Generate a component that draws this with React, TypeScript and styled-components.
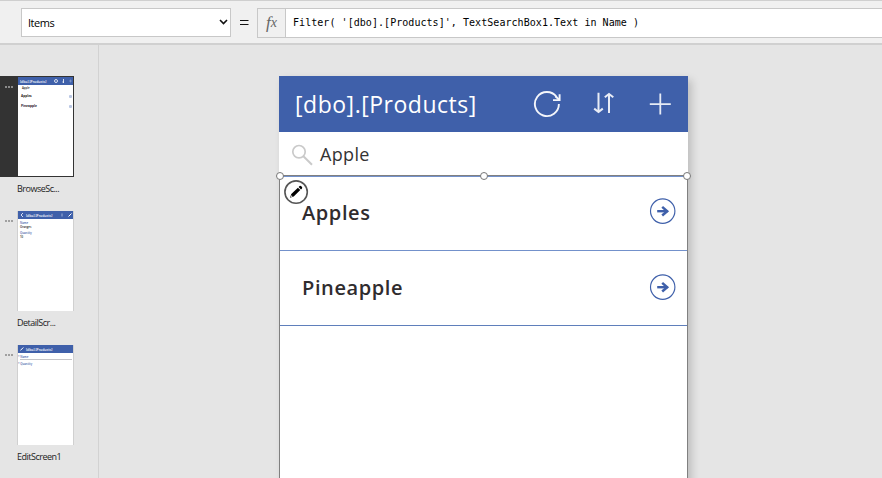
import React from "react";
import styled, { createGlobalStyle } from "styled-components";

const blue = "#3f60aa";

const GlobalStyle = createGlobalStyle`
  * { box-sizing: border-box; }
  html, body { margin: 0; height: 100%; overflow: hidden; }
  body { background: #e5e5e5; font-family: "Open Sans", "Noto Sans", sans-serif; color: #000; }
  svg { display: block; flex: none; }
`;

const Page = styled.div`
  width: 882px;
  height: 478px;
  display: flex;
  flex-direction: column;
  overflow: hidden;
  background: #e5e5e5;
`;

const FormulaBar = styled.div`
  height: 45px;
  flex: none;
  display: flex;
  align-items: flex-start;
  padding: 7px 0 0 21px;
  background: #f0f0f0;
  border-top: 1px solid #cfcfcf;
  border-bottom: 2px solid #d0d0d0;
`;

const PropertySelect = styled.div`
  width: 210px;
  height: 29px;
  display: flex;
  align-items: center;
  justify-content: space-between;
  padding: 0 2px 0 6px;
  background: #fff;
  border: 1px solid #c8c8c8;
  font-size: 11px;
  letter-spacing: -0.45px;
`;

const Equals = styled.div`
  width: 26px;
  height: 29px;
  display: flex;
  align-items: center;
  justify-content: center;
`;

const FormulaField = styled.div`
  flex: 1;
  height: 30px;
  display: flex;
  background: #fff;
  border: 1px solid #c8c8c8;
  border-right: 0;
`;

const FxLabel = styled.div`
  width: 28px;
  display: flex;
  align-items: center;
  justify-content: center;
  background: #f0f0f0;
  border-right: 1px solid #c8c8c8;
  color: #666;
  font: italic 17px/26px "Liberation Serif", serif;
  span { font-size: 14px; }
`;

const Formula = styled.div`
  padding-left: 7px;
  font: 10px/27px "DejaVu Sans Mono", monospace;
  letter-spacing: 0.05px;
  white-space: pre;
`;

const Workspace = styled.div`
  flex: 1;
  min-height: 0;
  display: flex;
`;

const Sidebar = styled.div`
  width: 99px;
  flex: none;
  padding-top: 31px;
  border-right: 1px solid #d2d2d2;
`;

const ScreenItem = styled.div<{ $gap: number }>`
  margin-bottom: ${(p) => p.$gap}px;
`;

const ScreenFrame = styled.div<{ $active?: boolean }>`
  width: 74px;
  height: 101px;
  display: flex;
  padding: 1px 1px ${(p) => (p.$active ? 1 : 0)}px 0;
  background: ${(p) => (p.$active ? "#333" : "transparent")};
`;

const Dots = styled.div<{ $active?: boolean }>`
  width: 18px;
  flex: none;
  display: flex;
  gap: 1px;
  padding: 9px 0 0 5px;
  i {
    width: 2px;
    height: 2px;
    background: ${(p) => (p.$active ? "#8a8a8a" : "#a0a0a0")};
  }
`;

const Thumb = styled.div<{ $active?: boolean }>`
  width: ${(p) => (p.$active ? 55 : 57)}px;
  margin-left: ${(p) => (p.$active ? 0 : -1)}px;
  flex: none;
  background: #fff;
  border: solid #d0d0d0;
  border-width: ${(p) => (p.$active ? "0" : "0 1px")};
`;

const ThumbHeader = styled.div`
  height: 8px;
  display: flex;
  align-items: center;
  padding: 0 1px 0 2px;
  background: ${blue};
  color: #fff;
  font-size: 3.4px;
  font-weight: 600;
  line-height: 7px;
  white-space: nowrap;
`;

const ThumbIcons = styled.div`
  margin-left: auto;
  display: flex;
  gap: 4px;
`;

const ThumbLine = styled.div<{ $tone?: string; $bold?: boolean; $h: number; $indent?: number }>`
  height: ${(p) => p.$h}px;
  display: flex;
  align-items: center;
  justify-content: space-between;
  padding: 0 1px 0 ${(p) => p.$indent ?? 2}px;
  color: ${(p) => p.$tone ?? "#222"};
  font-size: ${(p) => (p.$bold ? 3.2 : 2.8)}px;
  font-weight: ${(p) => (p.$bold ? 700 : 600)};
  line-height: 4px;
  white-space: nowrap;
`;

const ThumbGap = styled.div<{ $h: number }>`
  height: ${(p) => p.$h}px;
`;

const ThumbInput = styled.div`
  height: 1px;
  margin: 0 1px 0 2px;
  background: #c4c4c8;
`;

const ThumbArrow = styled.b`
  width: 3px;
  height: 3px;
  border-radius: 1px;
  background: #bac7e4;
`;

const ScreenName = styled.div`
  padding: 4px 0 0 17px;
  font-size: 9px;
  line-height: 15px;
  letter-spacing: -0.5px;
  color: #222;
`;

const Canvas = styled.div`
  flex: 1;
  padding: 31px 0 0 180px;
`;

const Phone = styled.div`
  width: 409px;
  height: 440px;
  background: #fff;
  box-shadow: 4px 4px 8px rgba(0, 0, 0, 0.17);
`;

const AppHeader = styled.div`
  height: 56px;
  display: flex;
  align-items: center;
  padding: 0 16px;
  background: ${blue};
  color: #fff;
`;

const AppTitle = styled.div`
  width: 238px;
  font-size: 23px;
  line-height: 54px;
  letter-spacing: 0.52px;
  white-space: nowrap;
`;

const HeaderIcons = styled.div`
  display: flex;
  align-items: center;
`;

const HeaderIcon = styled.div<{ $after?: number }>`
  margin-right: ${(p) => p.$after ?? 0}px;
`;

const SearchRow = styled.div`
  height: 43px;
  display: flex;
  align-items: center;
  padding: 2px 0 0 12px;
  gap: 7px;
  font-size: 18px;
  line-height: 22px;
  letter-spacing: 0.35px;
  color: #333;
  span { padding-bottom: 2px; }
`;

const Gallery = styled.div`
  position: relative;
  height: 341px;
  border: 1px solid #808080;
`;

const GalleryRow = styled.div<{ $line: string; $first?: boolean }>`
  height: 75px;
  display: flex;
  align-items: center;
  justify-content: space-between;
  padding: 0 11px ${(p) => (p.$first ? 4 : 1)}px 22px;
  border-top: ${(p) => (p.$first ? "1px solid #7391cb" : "0")};
  border-bottom: 1px solid ${(p) => p.$line};
`;

const ProductName = styled.div<{ $drop?: boolean }>`
  padding-top: ${(p) => (p.$drop ? 2 : 0)}px;
  font-size: 20px;
  font-weight: 600;
  letter-spacing: 0.6px;
  color: #302c2e;
`;

const Handle = styled.div<{ $x: number }>`
  position: absolute;
  left: ${(p) => p.$x}px;
  top: -4px;
  width: 8px;
  height: 8px;
  border: 1px solid #777;
  border-radius: 50%;
  background: #fff;
`;

const EditBadge = styled.div`
  position: absolute;
  left: 4px;
  top: 4px;
  width: 25px;
  height: 25px;
`;

const ReloadIcon = () => (
  <svg width="28" height="28" viewBox="0 0 28 28" fill="none" stroke="#f4f6fb" strokeWidth="1.9">
    <path d="M25.9 14A12 12 0 1 1 23.6 7" />
    <path d="M26.6 4.2V10.1H20" />
    <path d="M22.4 6.2L26.2 9.8" />
  </svg>
);

const SortIcon = () => (
  <svg width="22" height="24" viewBox="0 0 22 24" fill="none" stroke="#e8ecf6" strokeWidth="2">
    <path d="M5.5 .8V20M1.2 16.6L5.5 20L9.8 16.6" />
    <path d="M16 21V2.4M11.8 5.2L16 2L20.3 5.2" />
  </svg>
);

const AddIcon = () => (
  <svg width="22" height="22" viewBox="0 0 22 22" stroke="#e6ebf5" strokeWidth="1.8">
    <path d="M11.3 .5V21.5M.8 11.2H21.8" />
  </svg>
);

const SearchIcon = () => (
  <svg width="22" height="22" viewBox="0 0 22 22" fill="none" stroke="#cacaca">
    <circle cx="8" cy="7.7" r="6.2" strokeWidth="1.7" />
    <path d="M12.4 12.2L21 20.8" strokeWidth="2" />
  </svg>
);

const ArrowIcon = () => (
  <svg width="27" height="27" viewBox="0 0 27 27" fill="none" stroke={blue}>
    <circle cx="13.7" cy="13.1" r="12.2" strokeWidth="1.15" />
    <path d="M8.2 13.2H18.7" strokeWidth="2.4" />
    <path d="M13.2 8.9L18.2 13.2L13.2 17.5" strokeWidth="2.5" />
  </svg>
);

const PencilIcon = () => (
  <svg width="25" height="25" viewBox="0 0 25 25">
    <circle cx="12.1" cy="12.1" r="11.2" fill="#fff" stroke="#555" strokeWidth="1.6" />
    <path d="M6 17.8L7.3 14.1L13.9 7.7L16.3 10.1L9.7 16.6ZM14.6 7L15.6 6Q16.5 5.5 17.6 6.5T18 8.4L17 9.4Z" fill="#000" />
    <path d="M6.6 17.2L7.5 15.3L8.7 16.3Z" fill="#fff" />
  </svg>
);

const MenuDots = ({ active }: { active?: boolean }) => (
  <Dots $active={active}><i /><i /><i /></Dots>
);

export default function App() {
  return (
    <>
      <GlobalStyle />
      <Page>
        <FormulaBar>
          <PropertySelect>
            Items
            <svg width="9" height="7" viewBox="0 0 9 7" fill="none" stroke="#111" strokeWidth="1.6">
              <path d="M1 1L4.5 4.5L8 1" />
            </svg>
          </PropertySelect>
          <Equals>
            <svg width="9" height="6" viewBox="0 0 9 6"><path d="M0 .5H8.5M0 4.5H8.5" stroke="#111" /></svg>
          </Equals>
          <FormulaField>
            <FxLabel>f<span>x</span></FxLabel>
            <Formula>{"Filter( '[dbo].[Products]', TextSearchBox1.Text in Name )"}</Formula>
          </FormulaField>
        </FormulaBar>
        <Workspace>
          <Sidebar>
            <ScreenItem $gap={14}>
              <ScreenFrame $active>
                <MenuDots active />
                <Thumb $active>
                  <ThumbHeader>
                    [dbo].[Products]
                    <ThumbIcons>
                      <svg width="4" height="4" viewBox="0 0 4 4"><circle cx="2" cy="2" r="1.5" fill="none" stroke="#fff" strokeWidth=".8" /></svg>
                      <svg width="3" height="4" viewBox="0 0 3 4"><path d="M1.5 0V4M.4 3H1.6" stroke="#fff" strokeWidth=".8" /></svg>
                      <svg width="3" height="4" viewBox="0 0 3 4"><path d="M1.5 .5V3.5M0 2H3" stroke="#9fb0d6" strokeWidth=".5" /></svg>
                    </ThumbIcons>
                  </ThumbHeader>
                  <ThumbLine $h={6} $indent={4}>Apple</ThumbLine>
                  <ThumbGap $h={2} />
                  <ThumbLine $h={6} $indent={3} $bold>Apples<ThumbArrow /></ThumbLine>
                  <ThumbGap $h={4} />
                  <ThumbLine $h={6} $indent={3} $bold>Pineapple<ThumbArrow /></ThumbLine>
                </Thumb>
              </ScreenFrame>
              <ScreenName>BrowseSc...</ScreenName>
            </ScreenItem>
            <ScreenItem $gap={14}>
              <ScreenFrame>
                <MenuDots />
                <Thumb>
                  <ThumbHeader>
                    <svg width="6" height="4" viewBox="0 0 6 4"><path d="M3 0L1 2L3 4" fill="none" stroke="#fff" strokeWidth=".8" /></svg>
                    [dbo].[Products]
                    <ThumbIcons>
                      <svg width="3" height="4" viewBox="0 0 3 4"><path d="M1 .5V3.5" stroke="#9fb0d6" /></svg>
                      <svg width="4" height="4" viewBox="0 0 4 4"><path d="M.5 3.5L3.5 .5" stroke="#fff" /></svg>
                    </ThumbIcons>
                  </ThumbHeader>
                  <ThumbGap $h={2} />
                  <ThumbLine $h={4} $tone={blue}>Name</ThumbLine>
                  <ThumbLine $h={4}>Oranges</ThumbLine>
                  <ThumbGap $h={2} />
                  <ThumbLine $h={4} $tone={blue}>Quantity</ThumbLine>
                  <ThumbLine $h={4}>10</ThumbLine>
                </Thumb>
              </ScreenFrame>
              <ScreenName>DetailScr...</ScreenName>
            </ScreenItem>
            <ScreenItem $gap={0}>
              <ScreenFrame>
                <MenuDots />
                <Thumb>
                  <ThumbHeader>
                    <svg width="6" height="4" viewBox="0 0 6 4"><path d="M.3 3.5L3.3 .5" stroke="#fff" /></svg>
                    [dbo].[Products]
                  </ThumbHeader>
                  <ThumbGap $h={2} />
                  <ThumbLine $h={4} $indent={0} $tone={blue}>* Name</ThumbLine>
                  <ThumbInput />
                  <ThumbGap $h={2} />
                  <ThumbLine $h={4} $indent={0} $tone={blue}>* Quantity</ThumbLine>
                </Thumb>
              </ScreenFrame>
              <ScreenName>EditScreen1</ScreenName>
            </ScreenItem>
          </Sidebar>
          <Canvas>
            <Phone>
              <AppHeader>
                <AppTitle>[dbo].[Products]</AppTitle>
                <HeaderIcons>
                  <HeaderIcon $after={32}><ReloadIcon /></HeaderIcon>
                  <HeaderIcon $after={34}><SortIcon /></HeaderIcon>
                  <HeaderIcon><AddIcon /></HeaderIcon>
                </HeaderIcons>
              </AppHeader>
              <SearchRow><SearchIcon /><span>Apple</span></SearchRow>
              <Gallery>
                <GalleryRow $first $line="#7391cb"><ProductName $drop>Apples</ProductName><ArrowIcon /></GalleryRow>
                <GalleryRow $line="#5f7fbb"><ProductName>Pineapple</ProductName><ArrowIcon /></GalleryRow>
                <Handle $x={-4} />
                <Handle $x={200} />
                <Handle $x={403} />
                <EditBadge><PencilIcon /></EditBadge>
              </Gallery>
            </Phone>
          </Canvas>
        </Workspace>
      </Page>
    </>
  );
}
